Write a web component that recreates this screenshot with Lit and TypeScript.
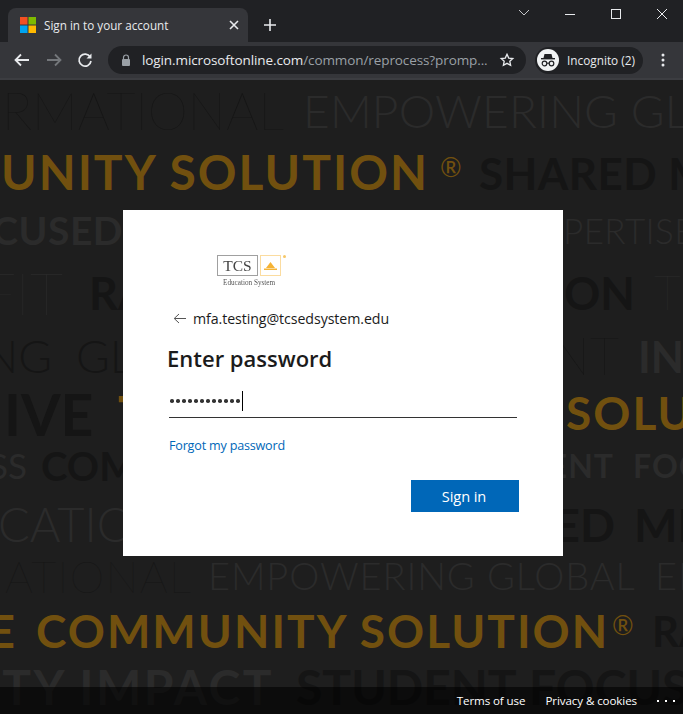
import { LitElement, html, svg, css } from "lit";
import { customElement } from "lit/decorators.js";

/* Slogan wall: text, x, baseline, size, class, letter-spacing, anchor */
type W = [string, number, number, number, string, number, ("start" | "end")?];
const wall: W[] = [
  ["RMATIONAL", 284, 130, 51, "hair dark", 0, "end"],
  ["EMPOWERING GLOBAL", 303, 128, 46, "light grey", 0.2],
  ["MUNITY SOLUTION", 429, 190, 48, "bold gold", 2, "end"],
  ["®", 440, 177, 26, "reg gold", 0],
  ["SHARED MISSION", 479, 190, 44, "bold dark", 0.4],
  ["FOCUSED", 123, 245, 39, "bold grey", 0.5, "end"],
  ["PERTISE", 563, 244, 35, "light grey", 0.4],
  ["FIT", 63, 315, 58, "hair grey", 0, "end"],
  ["RAPID", 89, 310, 45, "bold dark", 0],
  ["ON", 635, 310, 45, "bold dark", 0, "end"],
  ["T", 654, 310, 47, "hair grey", 0],
  ["NG", 52, 373, 46, "light dark", 0, "end"],
  ["GLOBAL", 76, 373, 46, "light dark", 0],
  ["NT", 619, 375, 51, "hair dark", 0, "end"],
  ["IN", 638, 373, 43, "bold grey", 0],
  ["IVE", 4, 436, 57, "bold dark", 0],
  ["T", 118, 436, 56, "bold gold", 0],
  ["SOLUTION", 566, 430, 46, "bold gold", 2],
  ["ACCESS", 27, 479, 35, "reg grey", 0, "end"],
  ["COMMUNITY", 41, 481, 40, "bold dark", 0],
  ["STUDENT", 614, 478, 32, "bold grey", 1, "end"],
  ["FOCUS", 633, 478, 32, "bold grey", 1],
  ["CATION", -2, 542, 47, "light grey", 0],
  ["SHARED", 615, 542, 46, "bold dark", 0, "end"],
  ["MISSION", 634, 542, 46, "bold dark", 0],
  ["ATIONAL", 5, 593, 44, "hair dark", 1.3],
  ["EMPOWERING GLOBAL", 208, 590, 38, "light grey", 0.9],
  ["EDUCATION", 655, 590, 38, "light grey", 0.9],
  ["THE", 17, 648, 46, "bold gold", 2, "end"],
  ["COMMUNITY SOLUTION", 36, 648, 46, "bold gold", 2],
  ["®", 612, 635, 26, "reg gold", 0],
  ["RAPID", 652, 647, 42, "bold dark", 0],
  ["ITY IMPACT", 274, 705, 48, "bold grey", 2.5, "end"],
  ["STUDENT", 296, 705, 48, "bold dark", 0],
  ["FOCUS", 529, 705, 48, "bold dark", 0],
];

@customElement("app-root")
export class AppRoot extends LitElement {
  static styles = css`
    :host { display: block; width: 683px; height: 714px; overflow: hidden; background: #1e1e1e; font-family: "Open Sans", "Noto Sans", sans-serif; }
    .chrome { height: 80px; background: #35363a; display: flex; flex-direction: column; box-sizing: border-box; border-bottom: 2px solid #3c3d41; }
    .titlebar { height: 42px; background: #202124; display: flex; align-items: flex-end; padding-left: 8px; color: #e8eaed; position: relative; }
    .tab { width: 240px; height: 34px; background: #35363a; border-radius: 8px 8px 0 0; display: flex; align-items: center; box-sizing: border-box; padding: 0 9px 0 12px; gap: 8px; font-size: 11.7px; color: #e8eaed; }
    .tab span { flex: 1; white-space: nowrap; }
    .plus { margin: 0 0 8px 13px; width: 18px; height: 18px; display: block; }
    .winctl { position: absolute; top: 0; right: 0; display: flex; }
    .winctl svg { display: block; }
    .toolbar { flex: 1; display: flex; align-items: center; position: relative; }
    .nav { display: flex; align-items: center; width: 108px; flex: none; padding-left: 13px; box-sizing: border-box; gap: 14px; }
    .nav svg { display: block; }
    .omni { width: 418px; height: 28px; border-radius: 14px; background: #202124; display: flex; align-items: center; padding: 0 11px 0 13px; box-sizing: border-box; font-size: 13.5px; letter-spacing: -0.1px; white-space: nowrap; }
    .host { color: #e8eaed; }
    .path { color: #9aa0a6; flex: 1; }
    .lock { margin-right: 11px; flex: none; }
    .pill { margin-left: 9px; width: 108px; height: 27px; border-radius: 14px; background: #202124; display: flex; align-items: center; box-sizing: border-box; padding-left: 2px; gap: 8px; font-size: 11.8px; color: #e8eaed; white-space: nowrap; }
    .dots { margin-left: 18px; display: block; }

    .stage { position: relative; height: 634px; padding: 130px 0 0 123px; box-sizing: border-box; overflow: hidden; }
    .bg { position: absolute; left: 0; top: 0; display: block; font-family: Lato, "Open Sans", sans-serif; }
    .hair { font-weight: 100; }
    .light { font-weight: 300; }
    .reg { font-weight: 400; }
    .bold { font-weight: 700; }
    .dark { fill: #151515; }
    .grey { fill: #2b2b2b; }
    .gold { fill: #71500f; }

    .card { position: relative; width: 440px; height: 346px; background: #fff; box-sizing: border-box; padding: 45px 44px 0 44px; color: #1b1b1b; display: flex; flex-direction: column; }
    .logo { height: 36px; margin-left: 50px; width: 72px; position: relative; filter: blur(0.4px); }
    .logo-top { display: flex; align-items: flex-start; gap: 2px; }
    .tcs { width: 41px; height: 21px; border: 1px solid #a0a0a0; box-sizing: border-box; font: 15.5px/19px "Liberation Serif", serif; color: #444; text-align: center; }
    .sun { width: 21px; height: 21px; border: 1px solid #fbdca0; box-sizing: border-box; display: flex; align-items: center; justify-content: center; }
    .reg-dot { width: 3px; height: 3px; border-radius: 50%; background: #f6c768; }
    .edu { font: 7.2px/9px "Liberation Serif", serif; color: #555; margin: 3px 0 0 6px; white-space: nowrap; }
    .ident { display: flex; align-items: center; margin: 17px 0 0 6px; height: 20px; font-size: 14.2px; color: #1b1b1b; gap: 7px; white-space: nowrap; letter-spacing: -0.08px; }
    h1 { margin: 16px 0 0 0; font-size: 22px; font-weight: 600; line-height: 28px; color: #1b1b1b; }
    .input { margin: 13px 2px 0 2px; height: 32px; border-bottom: 1px solid #333; display: flex; align-items: center; }
    .pw { display: flex; gap: 2.5px; padding-left: 1px; }
    .pw i { display: block; width: 3.5px; height: 3.5px; border-radius: 50%; background: #333; }
    .caret { width: 1px; height: 20px; background: #000; margin-left: 2px; }
    .forgot { margin: 19px 0 0 2px; font-size: 12.6px; line-height: 18px; color: #0067b8; letter-spacing: -0.2px; }
    .actions { display: flex; justify-content: flex-end; margin: 25px 0 0 0; }
    .signin { width: 108px; height: 32px; background: #0067b8; color: #fff; font-size: 14.6px; display: flex; align-items: center; justify-content: center; padding-right: 2px; box-sizing: border-box; letter-spacing: -0.1px; }

    .footer { position: absolute; left: 0; right: 0; bottom: 0; height: 27px; background: rgba(0,0,0,0.6); color: #fff; font-size: 11.6px; display: flex; align-items: center; justify-content: flex-end; gap: 20px; padding-right: 8px; letter-spacing: -0.1px; }
    .more { display: flex; gap: 6px; }
    .more i { display: block; width: 2px; height: 2px; background: #fff; }
  `;

  render() {
    return html`
      <div class="chrome">
        <div class="titlebar">
          <div class="tab">
            <svg width="16" height="16" viewBox="0 0 16 16">
              <rect x="0" y="0" width="7.5" height="7.5" fill="#f25022" />
              <rect x="8.5" y="0" width="7.5" height="7.5" fill="#7fba00" />
              <rect x="0" y="8.5" width="7.5" height="7.5" fill="#00a4ef" />
              <rect x="8.5" y="8.5" width="7.5" height="7.5" fill="#ffb900" />
            </svg>
            <span>Sign in to your account</span>
            <svg width="10" height="10" viewBox="0 0 10 10"><path d="M1 1l8 8M9 1l-8 8" stroke="#e8eaed" stroke-width="1.6" /></svg>
          </div>
          <svg class="plus" viewBox="0 0 18 18"><path d="M9 3v12M3 9h12" stroke="#e8eaed" stroke-width="1.6" /></svg>
          <div class="winctl">
            <svg width="343" height="28" viewBox="0 0 343 28">
              <path d="M179 10l5 5 5-5" fill="none" stroke="#c4c6c9" stroke-width="1" />
              <path d="M225 14.5h10" stroke="#e8eaed" stroke-width="1" />
              <rect x="271.5" y="9.5" width="9" height="9" fill="none" stroke="#e8eaed" stroke-width="1" />
              <path d="M317 9l10 10M327 9l-10 10" stroke="#e8eaed" stroke-width="1" />
            </svg>
          </div>
        </div>
        <div class="toolbar">
          <div class="nav">
            <svg width="18" height="16" viewBox="0 0 18 16"><path d="M16 8H3M8 2.5L2.5 8 8 13.5" fill="none" stroke="#e8eaed" stroke-width="1.8" /></svg>
            <svg width="18" height="16" viewBox="0 0 18 16"><path d="M2 8h13M10 2.5L15.5 8 10 13.5" fill="none" stroke="#74777b" stroke-width="1.8" /></svg>
            <svg width="16" height="16" viewBox="0 0 16 16"><path d="M13.2 5A6 6 0 1 0 14 9" fill="none" stroke="#e8eaed" stroke-width="1.7" /><path d="M14.5 1.5v5h-5z" fill="#e8eaed" /></svg>
          </div>
          <div class="omni">
            <svg class="lock" width="10" height="13" viewBox="0 0 10 13"><path d="M2.5 5V3.5a2.5 2.5 0 0 1 5 0V5" fill="none" stroke="#9aa0a6" stroke-width="1.2" /><rect x="1" y="5" width="8" height="7" rx="1" fill="#9aa0a6" /></svg>
            <span class="host">login.microsoftonline.com</span><span class="path">/common/reprocess?promp...</span>
            <svg width="16" height="16" viewBox="0 0 24 24"><path d="M12 3.5l2.6 5.6 6.1.7-4.5 4.2 1.2 6L12 17l-5.4 3 1.2-6-4.5-4.2 6.1-.7z" fill="none" stroke="#e8eaed" stroke-width="2" /></svg>
          </div>
          <div class="pill">
            <svg width="22" height="22" viewBox="0 0 22 22">
              <circle cx="11" cy="11" r="11" fill="#f1f3f4" />
              <path d="M7.5 5h7l1 4h-9z" fill="#202124" /><rect x="4" y="9" width="14" height="1.4" fill="#202124" />
              <circle cx="7.5" cy="14.5" r="2.3" fill="none" stroke="#202124" stroke-width="1.2" />
              <circle cx="14.5" cy="14.5" r="2.3" fill="none" stroke="#202124" stroke-width="1.2" />
              <path d="M9.8 14.2h2.4" stroke="#202124" stroke-width="1.1" />
            </svg>
            <span>Incognito (2)</span>
          </div>
          <svg class="dots" width="4" height="14" viewBox="0 0 4 14"><circle cx="2" cy="2" r="1.5" fill="#e8eaed" /><circle cx="2" cy="7" r="1.5" fill="#e8eaed" /><circle cx="2" cy="12" r="1.5" fill="#e8eaed" /></svg>
        </div>
      </div>
      <div class="stage">
        <svg class="bg" width="683" height="634" viewBox="0 80 683 634">
          ${wall.map(
            ([t, x, y, s, c, ls, a]) =>
              svg`<text class=${c} x=${x} y=${y} font-size=${s} letter-spacing=${ls} text-anchor=${a ?? "start"}>${t}</text>`
          )}
        </svg>
        <div class="card">
          <div class="logo">
            <div class="logo-top">
              <div class="tcs">TCS</div>
              <div class="sun">
                <svg width="13" height="9" viewBox="0 0 13 9"><path d="M0 7.5h13V9H0zM2 7L6.5 1 11 7z" fill="#f5b335" /></svg>
              </div>
              <div class="reg-dot"></div>
            </div>
            <div class="edu">Education System</div>
          </div>
          <div class="ident">
            <svg width="13" height="11" viewBox="0 0 13 11"><path d="M13 5.5H1.5M6 1L1.2 5.5 6 10" fill="none" stroke="#555" stroke-width="1" /></svg>
            <span>mfa.testing@tcsedsystem.edu</span>
          </div>
          <h1>Enter password</h1>
          <div class="input">
            <div class="pw">${Array.from({ length: 12 }).map(() => html`<i></i>`)}</div>
            <div class="caret"></div>
          </div>
          <div class="forgot">Forgot my password</div>
          <div class="actions"><div class="signin">Sign in</div></div>
        </div>
        <div class="footer">
          <span>Terms of use</span><span>Privacy &amp; cookies</span>
          <div class="more"><i></i><i></i><i></i></div>
        </div>
      </div>
    `;
  }
}
